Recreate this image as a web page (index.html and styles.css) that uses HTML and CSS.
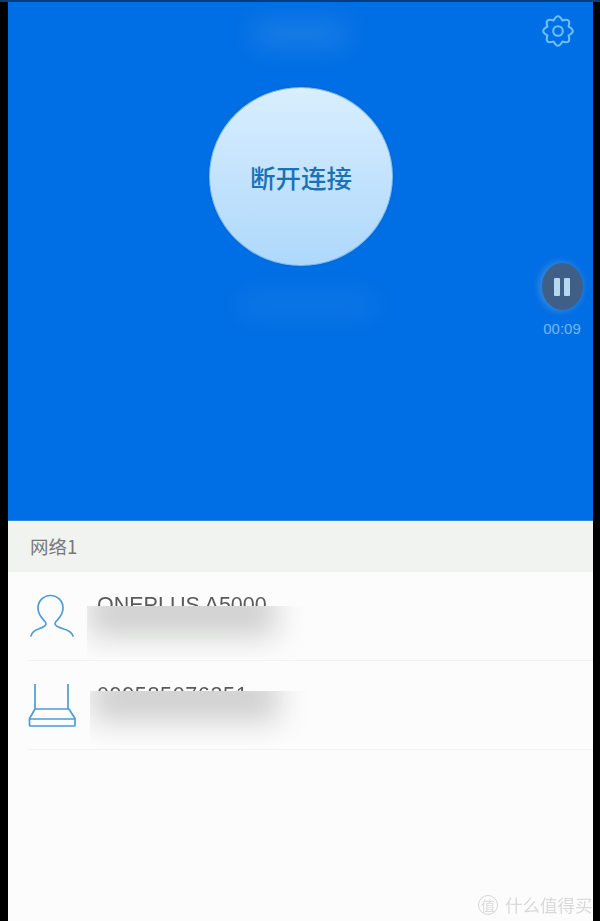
FILE: index.html
```html
<!DOCTYPE html>
<html lang="zh">
<head>
<meta charset="utf-8">
<title>网络</title>
<link rel="stylesheet" href="styles.css">
</head>
<body>
<div class="app">
  <section class="hero">
    <div class="smear smear-top"></div>
    <svg class="gear" viewBox="0 0 32 32" width="32" height="32" fill="none" stroke="#6cc0fb" stroke-width="2.100" stroke-linejoin="round">
      <path d="M26.600 11.600Q35 16 26.600 20.400Q29.400 29.400 20.400 26.600Q16 35 11.600 26.600Q2.600 29.400 5.400 20.400Q-3 16 5.400 11.600Q2.600 2.600 11.600 5.400Q16 -3 20.400 5.400Q29.400 2.600 26.600 11.600Z"/>
      <circle cx="16" cy="16" r="4.800"/>
    </svg>
    <button class="disconnect">断开连接</button>
    <div class="smear smear-bottom"></div>
    <div class="timer">
      <div class="pause"><span class="bar"></span><span class="bar"></span></div>
      <div class="time">00:09</div>
    </div>
  </section>
  <section class="list">
    <div class="group">网络1</div>
    <div class="row">
      <svg class="icon" viewBox="0 0 48 48" width="48" height="48" fill="none" stroke="#4f9bd2" stroke-width="1.700" stroke-linecap="round" stroke-linejoin="round">
        <path d="M3 44c.8-3.800 3.800-5.800 8-7.200 3.500-1.200 7-2.400 7-5 0-1.500-1.200-2.300-2.400-3.800C13.500 25.700 10 22 10 16 10 9 15.500 3.500 22.500 3.500S35 9 35 16c0 6-3.500 9.700-5.600 12-1.200 1.500-2.400 2.300-2.400 3.800 0 2.600 4 3.800 8 5 4.800 1.400 9.200 3.400 10 7.200"/>
      </svg>
      <div class="name name-a">ONEPLUS A5000</div>
      <div class="redact redact-a"></div>
    </div>
    <div class="row">
      <svg class="icon" viewBox="0 0 48 48" width="48" height="48" fill="none" stroke="#4f9bd2" stroke-width="1.700" stroke-linejoin="round">
        <path d="M7 3v25M40 3v25"/>
        <path d="M7 28h34l6 9.500v6.500c0 .6-.4 1-1 1H2.500c-.6 0-1-.4-1-1v-6.500z"/>
        <path d="M1.500 38h45.500"/>
      </svg>
      <div class="name name-b">099585076351</div>
      <div class="redact redact-b"></div>
    </div>
    <div class="watermark"><span class="seal">值</span><span>什么值得买</span></div>
  </section>
</div>
</body>
</html>
```
FILE: styles.css
```css
* { box-sizing: border-box; }
html, body { margin: 0; height: 921px; background: #000; overflow: hidden; }
body { font-family: "Noto Sans CJK SC", "Liberation Sans", sans-serif; }
.app { width: 585px; height: 921px; margin-left: 8px; display: flex; flex-direction: column; background: #fbfcfb; padding-top: 2px; position: relative; filter: blur(.5px); }
.app::before { content: ""; position: absolute; left: -8px; right: -7px; top: 0; height: 2px; background: #0a3a78; }
.hero { position: relative; height: 519px; flex: none; background: #006ee4; padding-top: 85px; display: flex; flex-direction: column; align-items: center; border-bottom: 1px solid #2f86dd; }
.disconnect { width: 184px; height: 179px; margin-left: 1px; padding: 0; border: 1px solid #7dbcf0; border-radius: 50%; background: linear-gradient(#d9eefe, #aed8fb); color: #1a72b6; font: 500 25.500px/1 "Noto Sans CJK SC", sans-serif; box-shadow: 0 0 2px #0a5cb5; }
.smear { position: absolute; background: #4a9be8; }
.smear-top { left: 245px; top: 20px; width: 95px; height: 24px; filter: blur(14px); opacity: .4; }
.smear-bottom { left: 232px; top: 292px; width: 135px; height: 22px; filter: blur(14px); opacity: .22; }
.gear { position: absolute; left: 534px; top: 13px; }
.timer { position: absolute; left: 529px; top: 261px; width: 50px; display: flex; flex-direction: column; align-items: center; gap: 10px; }
.pause { width: 41px; height: 47px; border-radius: 50%; background: #3f5f86; box-shadow: -2px 0 6px 2px #2f86dd; display: flex; align-items: center; justify-content: center; gap: 4px; }
.bar { width: 6px; height: 18px; border-radius: 1px; background: #b5d8f0; }
.time { font: 15px/18px "Liberation Sans", sans-serif; color: #74b7f3; }
.list { position: relative; flex: 1; }
.group { height: 51px; padding: 10px 0 0 22px; background: #f1f3f1; color: #777; font-size: 18.500px; font-weight: 400; line-height: 30px; }
.row { position: relative; height: 89px; margin-left: 20px; border-bottom: 1px solid #f1f3f1; overflow: hidden; }
.icon { position: absolute; left: 0; top: 20px; }
.name { font: 21.500px/24px "Liberation Sans", sans-serif; color: #5a5a5a; white-space: nowrap; margin-left: 69px; }
.name-a { padding-top: 21px; }
.name-b { padding-top: 22px; letter-spacing: .65px; }
.redact { position: absolute; width: 220px; height: 54px; background: #fbfcfb; overflow: hidden; }
.redact::before { content: ""; position: absolute; left: 2px; top: -16px; width: 186px; height: 46px; background: #cdcecd; filter: blur(15px); }
.redact-a { left: 59px; top: 34px; }
.redact-b { left: 62px; top: 30px; }
.watermark { position: absolute; left: 470px; bottom: 5px; display: flex; align-items: center; gap: 7px; color: #dadada; font-size: 17.500px; line-height: 22px; white-space: nowrap; }
.seal { width: 20px; height: 20px; border: 1px solid #d4d4d4; border-radius: 50%; font-size: 14px; line-height: 18px; text-align: center; flex: none; }
```
